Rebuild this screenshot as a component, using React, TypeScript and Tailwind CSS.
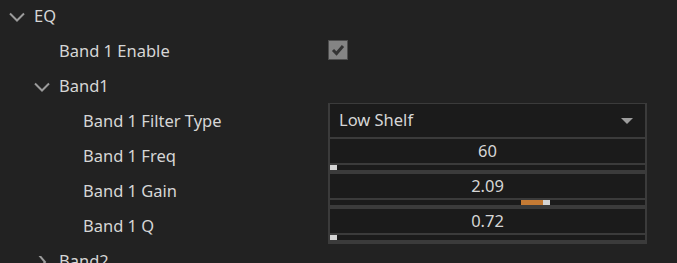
import React from 'react';

function Chevron({ open }: { open: boolean }) {
  return (
    <svg width="18" height="12" viewBox="0 0 18 12" className="shrink-0">
      {open ? (
        <path d="M2 2.5 L9 9.5 L16 2.5" fill="none" stroke="#9b9b9b" strokeWidth="2" />
      ) : (
        <path d="M6 -1 L12 6 L6 13" fill="none" stroke="#9b9b9b" strokeWidth="2" />
      )}
    </svg>
  );
}

function Slider({ value, pos, fill }: { value: string; pos: number; fill?: [number, number] }) {
  return (
    <div className="h-[35px] bg-[#3b3b3b] px-[2px] flex flex-col">
      <div className="h-[24px] bg-[#1b1b1b] flex items-center justify-center text-[#d6d6d6]">{value}</div>
      <div className="h-[2px]" />
      <div className="h-[5px] bg-[#1b1b1b] relative">
        {fill && (
          <div className="absolute top-0 h-[5px] bg-[#c47a34]" style={{ left: fill[0], width: fill[1] }} />
        )}
        <div className="absolute top-0 h-[5px] w-[7px] bg-[#d4d4d4]" style={{ left: pos }} />
      </div>
    </div>
  );
}

function Row({ indent, chevron, label, children }: { indent: number; chevron?: boolean; label: string; children?: React.ReactNode }) {
  const hasChevron = chevron !== undefined;
  return (
    <div className="flex h-[35px] items-stretch">
      <div className="w-[328px] flex items-center" style={{ paddingLeft: indent }}>
        {hasChevron ? <Chevron open={chevron} /> : null}
        <span className={hasChevron ? 'ml-[8px]' : ''}>{label}</span>
      </div>
      <div className="w-[319px]">{children}</div>
    </div>
  );
}

export default function App() {
  return (
    <div
      className="w-[677px] h-[263px] overflow-hidden bg-[#222222] text-[#d6d6d6] text-[16.5px]"
      style={{ fontFamily: '"Noto Sans", "Open Sans", sans-serif' }}
    >
      <div className="-mt-[1px]">
        <Row indent={8} chevron={true} label="EQ" />
        <Row indent={59} label="Band 1 Enable">
          <div className="h-full flex items-center">
            <div className="w-[20px] h-[20px] -mt-[3px] border border-[#4e4e4e] bg-[#848484] flex items-center justify-center">
              <svg width="14" height="12" viewBox="0 0 14 12">
                <path d="M2 6 L5.5 9.5 L12 2" fill="none" stroke="#333333" strokeWidth="3" />
              </svg>
            </div>
          </div>
        </Row>
        <Row indent={33} chevron={true} label="Band1" />
        <Row indent={83} label="Band 1 Filter Type">
          <div className="h-[36px] -mt-[1px] border-x-2 border-t border-b-2 border-[#3b3b3b] bg-[#1b1b1b] flex items-center justify-between pl-[9px] pr-[12px]">
            <span>Low Shelf</span>
            <svg width="12" height="6" viewBox="0 0 12 6">
              <path d="M0 0 H12 L6 6 Z" fill="#9d9d9d" />
            </svg>
          </div>
        </Row>
        <Row indent={83} label="Band 1 Freq">
          <Slider value="60" pos={0} />
        </Row>
        <Row indent={83} label="Band 1 Gain">
          <Slider value="2.09" pos={213} fill={[191, 22]} />
        </Row>
        <Row indent={83} label="Band 1 Q">
          <Slider value="0.72" pos={0} />
        </Row>
        <Row indent={33} chevron={false} label="Band2" />
      </div>
    </div>
  );
}
